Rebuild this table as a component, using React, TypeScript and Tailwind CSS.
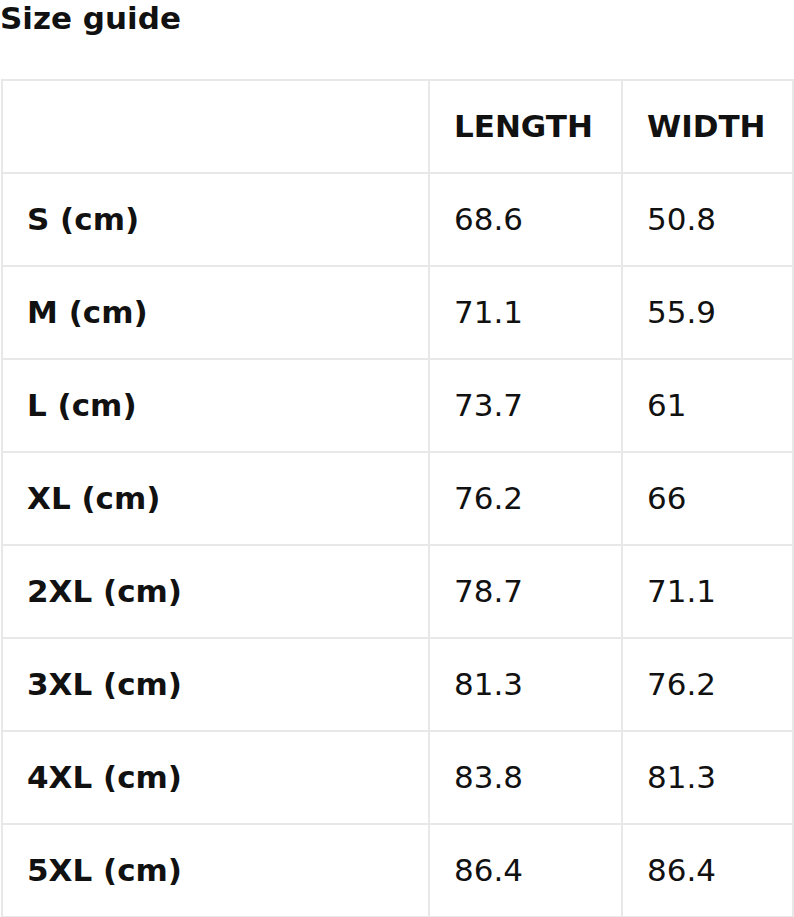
const rows: [string, string, string][] = [
  ['S (cm)', '68.6', '50.8'],
  ['M (cm)', '71.1', '55.9'],
  ['L (cm)', '73.7', '61'],
  ['XL (cm)', '76.2', '66'],
  ['2XL (cm)', '78.7', '71.1'],
  ['3XL (cm)', '81.3', '76.2'],
  ['4XL (cm)', '83.8', '81.3'],
  ['5XL (cm)', '86.4', '86.4'],
]

function Cell({ children, bold = false, w }: { children?: React.ReactNode; bold?: boolean; w: string }) {
  return (
    <div
      className={`${w} h-[93px] flex items-center pl-[24px] border-r-2 border-b-2 border-[#e8e8e8] text-[31px] text-[#111] ${
        bold ? 'font-bold' : 'font-normal'
      }`}
    >
      {children}
    </div>
  )
}

export default function App() {
  return (
    <div className="w-[794px] h-[917px] bg-white overflow-hidden" style={{ fontFamily: '"DejaVu Sans", sans-serif' }}>
      <h1 className="text-[31px] leading-[36px] font-bold text-[#111]">Size guide</h1>

      {/* Table */}
      <div className="mt-[43px] ml-[1px] w-[793px] border-l-2 border-t-2 border-[#e8e8e8]">
        <div className="flex">
          <Cell w="w-[427px]" />
          <Cell w="w-[193px]" bold>LENGTH</Cell>
          <Cell w="w-[171px]" bold>WIDTH</Cell>
        </div>
        {rows.map(([size, length, width]) => (
          <div key={size} className="flex">
            <Cell w="w-[427px]" bold>{size}</Cell>
            <Cell w="w-[193px]">{length}</Cell>
            <Cell w="w-[171px]">{width}</Cell>
          </div>
        ))}
      </div>
    </div>
  )
}
